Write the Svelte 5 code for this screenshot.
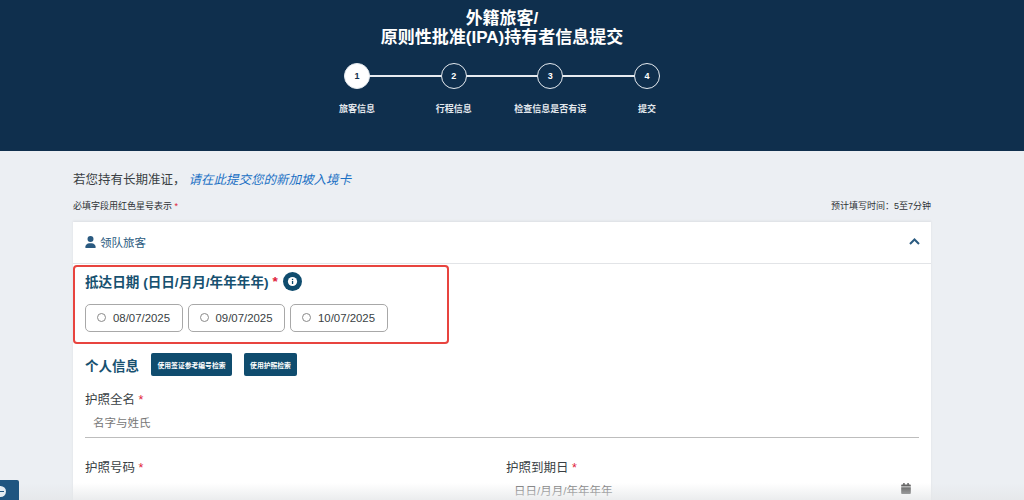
<script lang="ts">
  const steps = [
    { n: 1, label: '旅客信息', active: true },
    { n: 2, label: '行程信息', active: false },
    { n: 3, label: '检查信息是否有误', active: false },
    { n: 4, label: '提交', active: false }
  ];
  const dates = ['08/07/2025', '09/07/2025', '10/07/2025'];
</script>

<div class="page">
  <header class="hero">
    <h1>外籍旅客/<br />原则性批准(IPA)持有者信息提交</h1>
    <ol class="steps">
      {#each steps as step}
        <li class="step" class:active={step.active}>
          <span class="dot">{step.n}</span>
          <span class="step-label">{step.label}</span>
        </li>
      {/each}
    </ol>
  </header>

  <main class="content">
    <p class="notice">若您持有长期准证，<a href="#top">请在此提交您的新加坡入境卡</a></p>
    <div class="meta">
      <span>必填字段用红色星号表示 <i class="req">*</i></span>
      <span>预计填写时间：5至7分钟</span>
    </div>

    <section class="card">
      <div class="card-head">
        <span class="card-title">
          <svg width="11" height="12" viewBox="0 0 448 512" fill="currentColor"><path d="M224 256a128 128 0 1 0 0-256 128 128 0 0 0 0 256zm-45 48C80 304 0 384 0 483c0 16 13 29 29 29h390c16 0 29-13 29-29 0-99-80-179-179-179h-90z" /></svg>
          领队旅客
        </span>
        <svg class="chevron" width="11" height="7" viewBox="0 0 11 7" fill="none" stroke="currentColor" stroke-width="2"><path d="M1 6l4.5-4.5L10 6" /></svg>
      </div>

      <div class="card-body">
        <div class="arrival">
          <div class="arrival-title">
            抵达日期 (日日/月月/年年年年) <i class="req">*</i>
            <svg class="info" width="19" height="19" viewBox="0 0 19 19"><circle cx="9.5" cy="9.5" r="9.5" fill="#0f4c6e" /><circle cx="9.5" cy="9.5" r="4.6" fill="#fff" /><rect x="8.9" y="9" width="1.3" height="3" fill="#0f4c6e" /><rect x="8.9" y="6.8" width="1.3" height="1.3" fill="#0f4c6e" /></svg>
          </div>
          <div class="dates">
            {#each dates as date}
              <label class="date"><span class="radio"></span>{date}</label>
            {/each}
          </div>
        </div>

        <div class="personal">
          <h2>个人信息</h2>
          <button class="lookup first">使用签证参考编号检索</button>
          <button class="lookup">使用护照检索</button>
        </div>

        <div class="field full">
          <div class="label">护照全名 <i class="req">*</i></div>
          <div class="input">名字与姓氏</div>
        </div>

        <div class="row">
          <div class="field">
            <div class="label">护照号码 <i class="req">*</i></div>
            <div class="input"></div>
          </div>
          <div class="field">
            <div class="label">护照到期日 <i class="req">*</i></div>
            <div class="input">
              日日/月月/年年年年
              <svg class="cal" width="10" height="11" viewBox="0 0 448 512" fill="currentColor"><path d="M96 0h64v64h128V0h64v64h48c27 0 48 21 48 48v48H0v-48c0-27 21-48 48-48h48zM0 192h448v272c0 27-21 48-48 48H48c-27 0-48-21-48-48z" /></svg>
            </div>
          </div>
        </div>
      </div>
    </section>
  </main>

  <div class="fade"></div>
  <div class="badge"><span></span></div>
</div>

<style>
  :global(body) {
    margin: 0;
    background: #eceff3;
  }

  .page {
    position: relative;
    height: 500px;
    overflow: hidden;
    font-family: "Liberation Sans", "Noto Sans CJK SC", sans-serif;
    color: #3a3f44;
  }

  .hero {
    height: 151px;
    box-sizing: border-box;
    padding: 9px 20px 0 0;
    background: #0f2f4d;
    color: #fff;
  }

  h1 {
    margin: 0;
    font-size: 17px;
    line-height: 19px;
    font-weight: 700;
    text-align: center;
  }

  .steps {
    display: flex;
    justify-content: center;
    margin: 16px 0 0;
    padding: 0;
    list-style: none;
  }

  .step {
    position: relative;
    display: flex;
    flex-direction: column;
    align-items: center;
    width: 96.7px;
  }

  .step:not(:last-child)::after {
    content: '';
    position: absolute;
    top: 12px;
    left: 50%;
    width: 100%;
    height: 1.5px;
    background: #e6ebf0;
  }

  .dot {
    position: relative;
    z-index: 1;
    display: flex;
    align-items: center;
    justify-content: center;
    width: 26px;
    height: 26px;
    box-sizing: border-box;
    border: 1.5px solid #e6ebf0;
    border-radius: 50%;
    background: #0f2f4d;
    font-size: 9px;
    font-weight: 700;
  }

  .active .dot {
    background: #fff;
    color: #0f2f4d;
  }

  .step-label {
    margin-top: 14px;
    font-size: 9px;
    line-height: 12px;
    font-weight: 700;
    white-space: nowrap;
    color: #e3e8ed;
  }

  .content {
    width: 858px;
    margin: 0 0 0 73px;
  }

  .notice {
    margin: 21px 0 0;
    font-size: 12.5px;
    line-height: 16px;
  }

  .notice a {
    margin-left: 3px;
    color: #1a6fc4;
    font-style: italic;
    text-decoration: none;
  }

  .meta {
    display: flex;
    justify-content: space-between;
    margin-top: 12px;
    font-size: 9px;
    line-height: 12px;
    color: #2f3336;
  }

  .req {
    color: #e0213a;
    font-style: normal;
  }

  .card {
    margin-top: 10px;
    background: #fff;
    box-shadow: 0 -1px 2px #dcdfe3;
  }

  .card-head {
    display: flex;
    align-items: center;
    justify-content: space-between;
    height: 39px;
    padding: 0 11px 2px 12px;
    border-bottom: 1px solid #e2e4e7;
    color: #2a5a80;
    font-size: 11.5px;
  }

  .card-title {
    display: flex;
    align-items: center;
    gap: 4px;
  }

  .chevron {
    color: #2a5a80;
  }

  .card-body {
    padding: 1px 12px 0 0;
  }

  .arrival {
    width: 376px;
    height: 79px;
    box-sizing: border-box;
    padding: 4px 0 0 10px;
    border: 2px solid #e8443f;
    border-radius: 4px;
  }

  .arrival-title {
    display: flex;
    align-items: center;
    gap: 4px;
    height: 20px;
    color: #175170;
    font-size: 13.6px;
    font-weight: 700;
  }

  .info {
    margin-left: 1px;
  }

  .dates {
    display: flex;
    gap: 5px;
    margin-top: 13px;
  }

  .date {
    display: flex;
    align-items: center;
    width: 97.5px;
    height: 28px;
    box-sizing: border-box;
    padding-left: 12px;
    border: 1px solid #a8a8a8;
    border-radius: 5px;
    font-size: 11.4px;
  }

  .radio {
    width: 9px;
    height: 9px;
    box-sizing: border-box;
    margin: -2px 7px 0 -1px;
    border: 1px solid #8a8a8a;
    border-radius: 50%;
  }

  .personal {
    display: flex;
    align-items: center;
    margin: 9px 0 0 12px;
    height: 23px;
  }

  h2 {
    margin: 0 12px 0 0;
    color: #175170;
    font-size: 13.5px;
    font-weight: 700;
  }

  .lookup {
    height: 23px;
    padding: 0;
    border: 0;
    border-radius: 2px;
    background: #0f4c6e;
    color: #fff;
    font: 700 6.8px "Liberation Sans", "Noto Sans CJK SC", sans-serif;
    width: 53px;
  }

  .lookup.first {
    width: 81px;
    margin-right: 12px;
  }

  .field {
    flex: 1;
  }

  .full {
    margin: 14px 0 0 12px;
  }

  .label {
    font-size: 12.5px;
    line-height: 20px;
  }

  .input {
    position: relative;
    height: 28px;
    box-sizing: border-box;
    padding: 5px 0 0 8px;
    border-bottom: 1px solid #bdbdbd;
    color: #777;
    font-size: 11.5px;
    line-height: 16px;
  }

  .cal {
    position: absolute;
    top: 5px;
    right: 4px;
    color: #555;
  }

  .row {
    display: flex;
    gap: 12px;
    margin: 20px 0 0 12px;
  }

  .row .field {
    flex: none;
    width: 409px;
  }

  .row .field:first-child .input {
    border: 0;
  }

  .fade {
    position: absolute;
    left: 0;
    right: 0;
    bottom: 0;
    height: 17px;
    background: linear-gradient(to bottom, rgba(228, 230, 232, 0), rgba(228, 230, 232, 0.75));
  }

  .badge {
    position: absolute;
    left: 0;
    bottom: 0;
    width: 19px;
    height: 20px;
    overflow: hidden;
    border-top-right-radius: 2px;
    background: #1f5580;
  }

  .badge span {
    position: absolute;
    left: -5px;
    top: 6px;
    width: 11px;
    height: 11px;
    border-radius: 50%;
    background: #e4ecf2;
  }

  .badge span::after {
    content: '';
    position: absolute;
    left: 5px;
    top: 5px;
    width: 4px;
    height: 1px;
    background: #1f5580;
  }
</style>
